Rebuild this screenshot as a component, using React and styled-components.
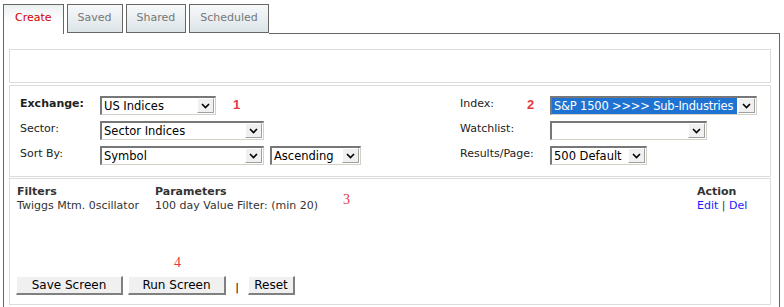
// Libraries
import React from 'react'
import styled, { createGlobalStyle } from 'styled-components'

const GlobalStyle = createGlobalStyle`
  body {
    margin: 0;
    background: #fff;
    font-family: "DejaVu Sans", Verdana, sans-serif;
    font-size: 11px;
    color: #222;
  }
`

// Chevron for the dropdown button
const Chevron = () => (
  <svg width="9" height="6" viewBox="0 0 9 6">
    <path d="M1 1 L4.5 4.5 L8 1" fill="none" stroke="#000" strokeWidth="1.6" />
  </svg>
)

const Select = ({ width, value, selected }) => (
  <SelectBox style={{ width }}>
    <SelectValue selected={selected}>{value}</SelectValue>
    <DropButton>
      <Chevron />
    </DropButton>
  </SelectBox>
)

// App
const App = () => (
  <Page>
    <GlobalStyle />
    <Tabs>
      <Tab active>Create</Tab>
      <Tab>Saved</Tab>
      <Tab>Shared</Tab>
      <Tab>Scheduled</Tab>
      <TabFill />
    </Tabs>
    <Panel>
      <Box $height={34} />
      <Box $height={92}>
        <Criteria>
          <Column $width={440}>
            <Row>
              <Label bold>Exchange:</Label>
              <Select width={116} value="US Indices" />
            </Row>
            <Row>
              <Label>Sector:</Label>
              <Select width={164} value="Sector Indices" />
            </Row>
            <Row>
              <Label>Sort By:</Label>
              <Select width={164} value="Symbol" />
              <Select width={91} value="Ascending" />
            </Row>
            <Marker style={{ left: 213, top: 1 }}>1</Marker>
          </Column>
          <Column>
            <Row>
              <Label $width={90}>Index:</Label>
              <Select width={207} value="S&P 1500 >>>> Sub-Industries" selected />
            </Row>
            <Row>
              <Label $width={90}>Watchlist:</Label>
              <Select width={157} value="" />
            </Row>
            <Row>
              <Label $width={90}>Results/Page:</Label>
              <Select width={97} value="500 Default" />
            </Row>
            <Marker style={{ left: 67, top: 1 }}>2</Marker>
          </Column>
        </Criteria>
      </Box>
      <Box $height={127} $gap={1}>
        <FilterTable>
          <HeadCell $width={138}>Filters</HeadCell>
          <HeadCell $width={542}>Parameters</HeadCell>
          <HeadCell>Action</HeadCell>
          <Cell $width={138}>Twiggs Mtm. 0scillator</Cell>
          <Cell $width={542}>100 day Value Filter: (min 20)</Cell>
          <Cell>
            <ActionLink>Edit</ActionLink> | <ActionLink>Del</ActionLink>
          </Cell>
        </FilterTable>
        <SerifMarker style={{ left: 333, top: 13 }}>3</SerifMarker>
        <Buttons>
          <Button $width={107}>Save Screen</Button>
          <Button $width={98}>Run Screen</Button>
          <Pipe>|</Pipe>
          <Button $width={47}>Reset</Button>
          <SerifMarker style={{ left: 158, top: -21 }}>4</SerifMarker>
        </Buttons>
      </Box>
    </Panel>
  </Page>
)

// Styles
const Page = styled.div`
  padding: 4px 0 0 3px;
  width: 777px;
`

const Tabs = styled.div`
  display: flex;
  align-items: flex-start;
  height: 30px;
`

const Tab = styled.div`
  box-sizing: border-box;
  height: ${p => (p.active ? 30 : 29)}px;
  padding: 6px 10px 0;
  margin-right: 3px;
  border: 1px solid #666;
  border-bottom: ${p => (p.active ? 'none' : '1px solid #666')};
  background: ${p =>
    p.active
      ? 'linear-gradient(#ecf0f1, #ffffff 60%)'
      : 'linear-gradient(#f7f9fa, #dce4e8)'};
  color: ${p => (p.active ? '#d00000' : '#777')};
  font-size: 11px;
  line-height: 14px;

  &:first-child {
    padding: 6px 11px 0;
  }
`

const TabFill = styled.div`
  flex: 1;
  border-bottom: 1px solid #666;
  height: 29px;
  margin-left: -3px;
`

const Panel = styled.div`
  border: 1px solid #666;
  border-top: none;
  margin-top: -1px;
  padding: 16px 8px 6px 5px;
  height: 280px;
  box-sizing: border-box;
  width: 777px;
`

const Box = styled.div`
  position: relative;
  box-sizing: border-box;
  height: ${p => p.$height}px;
  border: 1px solid #dcdcdc;
  margin-top: ${p => (p.$gap !== undefined ? p.$gap : 2)}px;
  &:first-child {
    margin-top: 0;
  }
`

const Criteria = styled.div`
  display: flex;
  padding: 10px 0 0 10px;
`

const Column = styled.div`
  position: relative;
  display: flex;
  flex-direction: column;
  gap: 6px;
  width: ${p => (p.$width ? `${p.$width}px` : 'auto')};
  flex: ${p => (p.$width ? 'none' : 1)};
`

const Row = styled.div`
  display: flex;
  align-items: center;
  gap: 6px;
  height: 19px;
`

const Label = styled.div`
  width: ${p => (p.$width || 80) - 6}px;
  flex: none;
  font-weight: ${p => (p.bold ? 'bold' : 'normal')};
  color: #222;
  position: relative;
  top: -2px;
`

const SelectBox = styled.div`
  box-sizing: border-box;
  display: flex;
  align-items: stretch;
  flex: none;
  height: 19px;
  border-top: 2px solid #777;
  border-left: 2px solid #777;
  border-right: 1px solid #d4d0c8;
  border-bottom: 1px solid #d4d0c8;
  background: #fff;
  font-size: 11.5px;
`

const SelectValue = styled.div`
  flex: 1;
  overflow: hidden;
  white-space: nowrap;
  line-height: 16px;
  padding-left: 2px;
  margin: 0 1px 0 0;
  color: ${p => (p.selected ? '#fff' : '#000')};
  background: ${p => (p.selected ? '#1e73d2' : 'transparent')};
  letter-spacing: ${p => (p.selected ? '-0.2px' : '0')};
`

const DropButton = styled.div`
  width: 17px;
  flex: none;
  box-sizing: border-box;
  display: flex;
  align-items: center;
  justify-content: center;
  background: #f0f0f0;
  border: 1px solid #a0a0a0;
  border-left-color: #fff;
  border-top-color: #fff;
  margin: 0 1px 1px 0;
`

const Marker = styled.div`
  position: absolute;
  color: #e8383d;
  font-weight: bold;
  font-size: 13px;
  font-family: "Liberation Sans", Arial, sans-serif;
`

const SerifMarker = styled.div`
  position: absolute;
  color: #e8383d;
  font-size: 14px;
  font-family: "Liberation Serif", "Times New Roman", serif;
`

const FilterTable = styled.div`
  display: flex;
  flex-wrap: wrap;
  padding: 6px 0 0 7px;
  row-gap: 1px;
`

const HeadCell = styled.div`
  width: ${p => (p.$width ? `${p.$width}px` : 'auto')};
  font-weight: bold;
  color: #333;
  line-height: 13px;
  flex: ${p => (p.$width ? 'none' : 1)};
`

const Cell = styled.div`
  width: ${p => (p.$width ? `${p.$width}px` : 'auto')};
  color: #333;
  line-height: 13px;
  flex: ${p => (p.$width ? 'none' : 1)};
`

const ActionLink = styled.span`
  color: #1a1aff;
  cursor: pointer;
`

const Buttons = styled.div`
  position: absolute;
  left: 6px;
  top: 97px;
  display: flex;
  align-items: center;
  gap: 5px;
`

const Button = styled.div`
  box-sizing: border-box;
  width: ${p => p.$width}px;
  height: 19px;
  display: flex;
  align-items: center;
  justify-content: center;
  background: #f0f0f0;
  border: 1px solid #fff;
  border-right: 2px solid #808080;
  border-bottom: 2px solid #808080;
  font-size: 12px;
  color: #000;
`

const Pipe = styled.div`
  width: 12px;
  text-align: center;
  padding-top: 4px;
  color: #000;
`

export default App
